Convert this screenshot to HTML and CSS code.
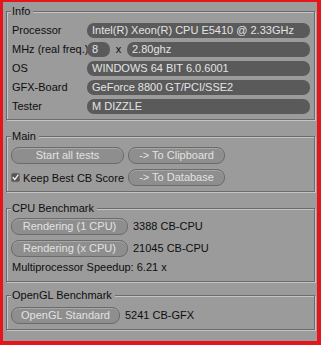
FILE: index.html
```html
<!DOCTYPE html>
<html lang="en">
<head>
	<meta charset="UTF-8">
	<title>Cinebench</title>
	<link rel="stylesheet" href="styles.css">
</head>
<body>
	<div class="window">
		<fieldset class="group info">
			<legend>Info</legend>
			<div class="rows">
				<span class="label">Processor</span>
				<span class="field">Intel(R) Xeon(R) CPU E5410 @ 2.33GHz</span>
				<span class="label">MHz (real freq.)</span>
				<span class="freq">
					<span class="field mult">8</span>
					<span class="times">x</span>
					<span class="field">2.80ghz</span>
				</span>
				<span class="label">OS</span>
				<span class="field">WINDOWS 64 BIT 6.0.6001</span>
				<span class="label">GFX-Board</span>
				<span class="field">GeForce 8800 GT/PCI/SSE2</span>
				<span class="label">Tester</span>
				<span class="field">M DIZZLE</span>
			</div>
		</fieldset>
		<fieldset class="group main">
			<legend>Main</legend>
			<div class="mainGrid">
				<button class="btn">Start all tests</button>
				<button class="btn">-&gt; To Clipboard</button>
				<label class="check">
					<svg width="13" height="13" viewBox="0 0 13 13"><rect x="0.5" y="0.5" width="12" height="12" rx="2.5" fill="#565656" stroke="#6e6e6e"/><path d="M3 6.5 L5.3 9.5 L10 3" fill="none" stroke="#ececec" stroke-width="2" stroke-linecap="round" stroke-linejoin="round"/></svg>
					Keep Best CB Score
				</label>
				<button class="btn">-&gt; To Database</button>
			</div>
		</fieldset>
		<fieldset class="group cpu">
			<legend>CPU Benchmark</legend>
			<div class="benchGrid">
				<button class="btn">Rendering (1 CPU)</button>
				<span class="value">3388 CB-CPU</span>
				<button class="btn">Rendering (x CPU)</button>
				<span class="value">21045 CB-CPU</span>
				<span class="speedup">Multiprocessor Speedup: 6.21 x</span>
			</div>
		</fieldset>
		<fieldset class="group gl">
			<legend>OpenGL Benchmark</legend>
			<div class="glRow">
				<button class="btn">OpenGL Standard</button>
				<span class="value">5241 CB-GFX</span>
			</div>
		</fieldset>
	</div>
</body>
</html>
```

FILE: styles.css
```css
*{margin:0;padding:0;box-sizing:border-box;}
body{background:#fff;font:11px "Liberation Sans",Arial,sans-serif;color:#0e0e0e;}
.window{width:321px;height:345px;border:solid #e8141c;border-width:2px 4px 4px 3px;background:#9b9b9b;padding:0 2px 0 3px;}

.group{border:1px solid #6b6b6b;box-shadow:inset 1px 1px 0 #c4c4c4,1px 1px 0 #c4c4c4;padding:4px 4px 5px;min-width:0;}
.group legend{line-height:13px;padding:0 3px 0 1px;background:#9b9b9b;}
.info{margin-top:3px;padding-top:5px;}
.main{margin-top:10px;}
.cpu{margin-top:10px;padding-top:3px;padding-bottom:7px;}
.gl{margin-top:7px;padding-top:5px;}

.rows{display:grid;grid-template-columns:76px 1fr;grid-auto-rows:15px;row-gap:4px;}
.label{padding-left:1px;line-height:15px;white-space:nowrap;}
.field{display:block;height:15px;line-height:15px;border-radius:7px;background:#5a5a5a;color:#e4e4e4;padding-left:5px;white-space:nowrap;overflow:hidden;}
.freq{display:flex;}
.freq .field{flex:1;}
.freq .mult{flex:none;width:23px;}
.times{width:17px;text-align:center;line-height:15px;}

.btn{display:block;height:17px;border:1px solid #6b6b6b;border-radius:8px;background:#8e8e8e;box-shadow:inset 0 1px 0 #a6a6a6;color:#e2e2e2;font:inherit;line-height:15px;text-align:center;white-space:nowrap;}

.mainGrid{display:grid;grid-template-columns:113px 97px;column-gap:4px;row-gap:5px;}
.check{display:flex;align-items:center;gap:3px;white-space:nowrap;}
.check svg{display:block;}

.benchGrid{display:grid;grid-template-columns:117px 1fr;column-gap:5px;row-gap:5px;}
.value{line-height:17px;white-space:nowrap;}
.speedup{grid-column:1 / 3;line-height:13px;margin-top:-1px;padding-left:1px;}

.glRow{display:grid;grid-template-columns:109px 1fr;column-gap:5px;}
```
